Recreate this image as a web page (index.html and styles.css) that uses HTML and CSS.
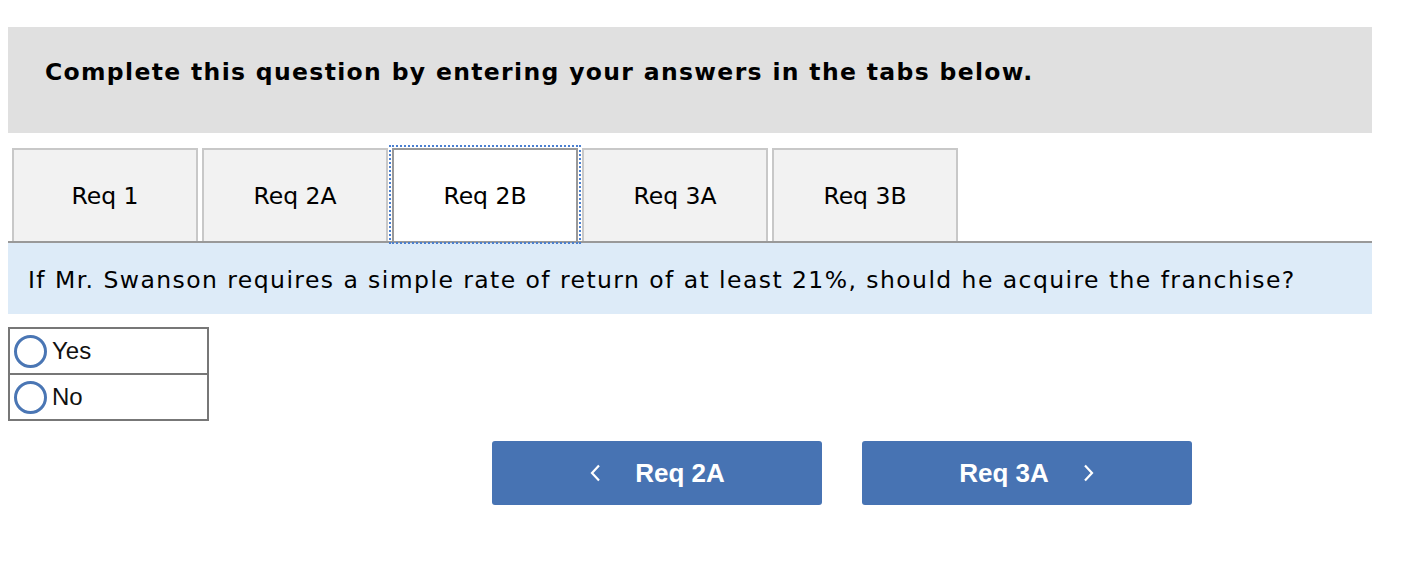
FILE: index.html
```html
<!DOCTYPE html>
<html>
<head>
<meta charset="utf-8">
<link rel="stylesheet" href="styles.css">
</head>
<body>
<div class="page">
  <div class="banner">
    <h1 class="banner-title">Complete this question by entering your answers in the tabs below.</h1>
  </div>
  <div class="tabs">
    <div class="tab">Req 1</div>
    <div class="tab">Req 2A</div>
    <div class="tab active">Req 2B</div>
    <div class="tab">Req 3A</div>
    <div class="tab">Req 3B</div>
  </div>
  <div class="question">If Mr. Swanson requires a simple rate of return of at least 21%, should he acquire the franchise?</div>
  <div class="choices">
    <div class="choice"><span class="radio"></span><span class="choice-label">Yes</span></div>
    <div class="choice"><span class="radio"></span><span class="choice-label">No</span></div>
  </div>
  <div class="nav">
    <div class="nav-btn">
      <svg class="chev" width="12" height="18" viewBox="0 0 12 18"><path d="M10 1.5 L3 9 L10 16.5" fill="none" stroke="#fff" stroke-width="2.2"/></svg>
      <span class="nav-text">Req 2A</span>
    </div>
    <div class="nav-btn">
      <span class="nav-text">Req 3A</span>
      <svg class="chev" width="12" height="18" viewBox="0 0 12 18"><path d="M2 1.5 L9 9 L2 16.5" fill="none" stroke="#fff" stroke-width="2.2"/></svg>
    </div>
  </div>
</div>
</body>
</html>
```
FILE: styles.css
```css
html, body { margin: 0; padding: 0; background: #fff; }
body { font-family: "DejaVu Sans", Verdana, sans-serif; color: #000; }
.page { padding: 27px 50px 0 8px; width: 1364px; }
.banner { background: #e0e0e0; height: 106px; display: flex; align-items: center; padding-left: 37px; }
.banner-title { margin: 0; font-size: 23.5px; letter-spacing: 1.33px; font-weight: bold; position: relative; top: -8px; }
.tabs { display: flex; gap: 4px; margin-top: 15px; padding-left: 4px; border-bottom: 2px solid #999; }
.tab { width: 182px; height: 91px; background: #f2f2f2; border: 2px solid #c8c8c8; border-bottom: none; display: flex; align-items: center; justify-content: center; font-size: 23.5px; box-sizing: content-box; }
.tab.active { background: #fff; border-color: #999; outline: 2px dotted #4a7fd0; outline-offset: 1px; }
.question { background: #ddebf8; height: 71px; display: flex; align-items: center; padding-left: 20px; font-size: 23.5px; letter-spacing: 1.43px; padding-top: 2px; box-sizing: border-box; }
.choices { margin-top: 13px; width: 197px; border: 2px solid #777; }
.choice { height: 44px; display: flex; align-items: center; padding-left: 4px; font-family: "Liberation Sans", Arial, sans-serif; font-size: 24px; color: #111; }
.choice + .choice { border-top: 2px solid #777; }
.radio { border: 3.5px solid #4a76b4; border-radius: 50%; box-sizing: border-box; width: 33px; height: 33px; margin-right: 5px; }
.nav { display: flex; gap: 40px; margin-top: 20px; padding-left: 484px; }
.nav-btn { width: 330px; height: 64px; background: #4773b3; border-radius: 3px; display: flex; align-items: center; justify-content: center; gap: 34px; color: #fff; }
.nav-text { font-family: "Liberation Sans", Arial, sans-serif; font-weight: bold; font-size: 26px; }
.chev { display: block; }
```
